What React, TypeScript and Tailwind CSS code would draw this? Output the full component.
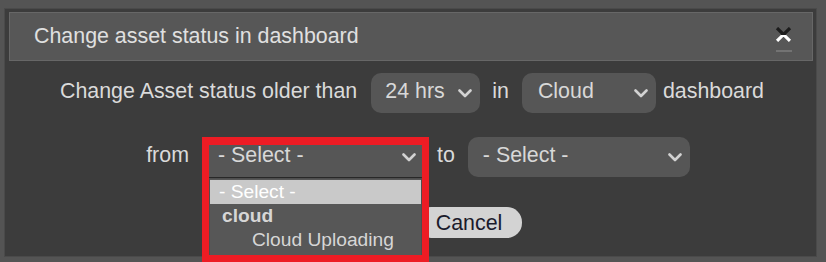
import React from 'react';

const font = { fontFamily: '"Liberation Sans", Arial, sans-serif' };

function Chevron() {
  return (
    <svg width="14" height="9" viewBox="0 0 14 9" className="shrink-0">
      <path d="M1.5 1.5 L7 7 L12.5 1.5" fill="none" stroke="#d2d2d2" strokeWidth="2.6" strokeLinecap="round" strokeLinejoin="round" />
    </svg>
  );
}

// caja tipo select (no nativo, para controlar el look)
function FakeSelect({ label, width, padLeft }: { label: string; width: string; padLeft: string }) {
  return (
    <div className={`${width} h-[40px] rounded-[10px] bg-[#565656] flex items-center justify-between pr-[8px] ${padLeft}`}>
      <span className="pb-1 text-[#d8d8d8]">{label}</span>
      <Chevron />
    </div>
  );
}

function CloseIcon() {
  return (
    <svg width="17" height="15" viewBox="0 0 17 15">
      <defs>
        <clipPath id="lowerHalf">
          <rect x="0" y="8" width="17" height="7" />
        </clipPath>
      </defs>
      <path d="M2 1 L15 14 M15 1 L2 14" stroke="#1c1c1c" strokeWidth="3.2" />
      <path d="M2 1 L15 14 M15 1 L2 14" stroke="#ffffff" strokeWidth="3.2" clipPath="url(#lowerHalf)" />
    </svg>
  );
}

export default function App() {
  return (
    <div className="w-[826px] h-[262px] overflow-hidden bg-[#545454] pl-[4px] pr-[9px] pt-[8px]" style={font}>
      <div className="h-[249px] bg-[#3c3c3c] border border-[#4a4a4a] pl-[4px] pr-[3px] pt-[3px] text-[21.4px] text-[#dadada]">
        {/* Cabecera */}
        <div className="h-[49px] bg-[#575757] border border-[#676767] flex items-center pl-[24px] pr-[20px]">
          <span className="text-[#e0e0e0]">Change asset status in dashboard</span>
          <div className="ml-auto flex flex-col items-center gap-[8px] pt-[6px]">
            <CloseIcon />
            <div className="w-[16px] h-[2px] bg-[#7f7f7f] opacity-70" />
          </div>
        </div>

        {/* Fila 1 */}
        <div className="mt-[12px] h-[40px] flex items-center justify-center pl-[2px]">
          <span className="pb-1">Change Asset status older than</span>
          <div className="ml-[14px]">
            <FakeSelect label="24 hrs" width="w-[109px]" padLeft="pl-[14px]" />
          </div>
          <span className="ml-[12px] pb-1">in</span>
          <div className="ml-[13px]">
            <FakeSelect label="Cloud" width="w-[134px]" padLeft="pl-[16px]" />
          </div>
          <span className="ml-[7px] pb-1">dashboard</span>
        </div>

        {/* Fila 2 */}
        <div className="mt-[24px] h-[40px] flex items-center justify-center pl-[14px]">
          <span className="pb-1">from</span>
          <div className="ml-[15px] relative z-10">
            <div className="w-[218px] h-[40px] bg-[#565656] flex items-center justify-between pl-[14px] pr-[6px] shadow-[0_2px_2px_rgba(0,0,0,0.35)]">
              <span className="pb-1 text-[#d8d8d8]">- Select -</span>
              <Chevron />
            </div>
            {/* lista desplegada */}
            <div className="absolute left-[5px] top-[41px] w-[213px] h-[90px] bg-[#575757] border border-[#4e4e4e] pt-[1px] text-[19.2px] leading-[24px]">
              <div className="bg-[#c9c9c9] text-white pl-[9px] h-[24px] pb-[2px]">- Select -</div>
              <div className="pl-[12px] font-bold text-[#d6d6d6]">cloud</div>
              <div className="pl-[42px] text-[#d6d6d6]">Cloud Uploading</div>
            </div>
            {/* marco rojo */}
            <div className="absolute left-[-2px] top-0 w-[227px] h-[125px] border-[7px] border-t-[8px] border-[#ed1c24] pointer-events-none" />
          </div>
          <span className="ml-[15px] pb-1">to</span>
          <div className="ml-[13px]">
            <FakeSelect label="- Select -" width="w-[222px]" padLeft="pl-[15px]" />
          </div>
        </div>

        {/* Botones */}
        <div className="mt-[30px] flex justify-center pl-[116px]">
          <button className="w-[106px] h-[31px] rounded-[15px] bg-[#d3d3d3] text-[#1b1b2b] pb-1">Cancel</button>
        </div>
      </div>
    </div>
  );
}
